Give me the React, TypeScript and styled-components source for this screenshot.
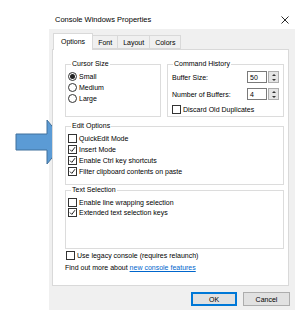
import styled, { createGlobalStyle } from 'styled-components';

const GlobalStyle = createGlobalStyle`
  html, body {
    margin: 0;
    padding: 0;
    background: #fff;
  }
  body {
    font-family: 'Liberation Sans', Arial, sans-serif;
    font-size: 7px;
    color: #000;
  }
`;

const Page = styled.div`
  position: relative;
  width: 300px;
  height: 315px;
  overflow: hidden;
  background: #fff;
`;

const Window = styled.div`
  margin-left: 49px;
  width: 246px;
  display: flex;
  flex-direction: column;
`;

const TitleBar = styled.div`
  height: 19px;
  padding-top: 10px;
  display: flex;
  align-items: center;
  justify-content: space-between;
  padding-left: 6px;
  padding-right: 6px;
`;

const Title = styled.span`
  font-size: 7.5px;
  color: #000;
`;

const Body = styled.div`
  height: 281px;
  box-sizing: border-box;
  background: #f0f0f0;
  padding: 4px 6px 0 3px;
  display: flex;
  flex-direction: column;
`;

const TabStrip = styled.div`
  display: flex;
  align-items: flex-end;
  height: 16px;
  padding-left: 1px;
`;

const Tab = styled.div<{ $active?: boolean }>`
  position: relative;
  box-sizing: border-box;
  height: ${(p) => (p.$active ? '17px' : '14px')};
  margin-bottom: ${(p) => (p.$active ? '-1px' : '0')};
  margin-left: -1px;
  padding: 0 ${(p) => (p.$active ? '7px' : '5px')};
  border: 1px solid #d9d9d9;
  border-bottom: ${(p) => (p.$active ? 'none' : '1px solid #d9d9d9')};
  background: ${(p) => (p.$active ? '#fff' : '#f0f0f0')};
  z-index: ${(p) => (p.$active ? 2 : 1)};
  display: flex;
  align-items: center;
  padding-bottom: ${(p) => (p.$active ? '2px' : '0')};

  &:first-child {
    margin-left: 0;
  }
`;

const Panel = styled.div`
  position: relative;
  z-index: 1;
  box-sizing: border-box;
  height: 237px;
  background: #fff;
  border: 1px solid #d9d9d9;
  padding: 9px 4px 0 12px;
  display: flex;
  flex-direction: column;
`;

const TopRow = styled.div`
  display: flex;
  gap: 6px;
`;

const GroupBox = styled.fieldset<{ $width?: number; $height?: number; $mt?: number }>`
  box-sizing: border-box;
  margin: ${(p) => p.$mt ?? 0}px 0 0 0;
  padding: 2px 4px 1px 2px;
  border: 1px solid #dcdcdc;
  min-width: 0;
  ${(p) => (p.$width ? `width: ${p.$width}px; flex: none;` : 'flex: 1;')}
  ${(p) => (p.$height ? `height: ${p.$height}px;` : '')}
`;

const Legend = styled.legend`
  padding: 0 1px;
  margin-left: 3px;
  line-height: 10px;
`;

const OptionRow = styled.label<{ $h?: number }>`
  display: flex;
  align-items: center;
  height: ${(p) => p.$h ?? 11}px;
  gap: 2px;
  white-space: nowrap;
`;

const RadioCircle = styled.span<{ $checked?: boolean }>`
  box-sizing: border-box;
  width: 9px;
  height: 9px;
  border-radius: 50%;
  border: 1px solid #333;
  background: #fff;
  display: flex;
  align-items: center;
  justify-content: center;

  &::after {
    content: '';
    width: 5px;
    height: 5px;
    border-radius: 50%;
    background: ${(p) => (p.$checked ? '#222' : 'transparent')};
  }
`;

const CheckBox = styled.span`
  box-sizing: border-box;
  width: 9px;
  height: 9px;
  border: 1px solid #333;
  background: #fff;
  display: flex;
  align-items: center;
  justify-content: center;
  flex: none;
`;

const SpinRow = styled.div<{ $mt?: number }>`
  display: flex;
  align-items: center;
  justify-content: space-between;
  height: 12px;
  margin-top: ${(p) => p.$mt ?? 0}px;
  padding-left: 2px;
`;

const SpinBox = styled.div`
  display: flex;
  gap: 1px;
  height: 12px;
`;

const SpinValue = styled.div`
  box-sizing: border-box;
  width: 20px;
  height: 12px;
  border: 1px solid #7a7a7a;
  background: #fff;
  padding-left: 2px;
  display: flex;
  align-items: center;
`;

const SpinButtons = styled.div`
  box-sizing: border-box;
  width: 11px;
  height: 12px;
  border: 1px solid #adadad;
  background: #e5e5e5;
  display: flex;
  flex-direction: column;
  align-items: center;
  justify-content: space-around;
`;

const Arrow = styled.span<{ $down?: boolean }>`
  width: 0;
  height: 0;
  border-left: 2px solid transparent;
  border-right: 2px solid transparent;
  ${(p) => (p.$down ? 'border-top: 2px solid #333;' : 'border-bottom: 2px solid #333;')}
`;

const DiscardRow = styled(OptionRow)`
  margin-top: 4px;
  padding-left: 2px;
`;

const Bottom = styled.div`
  margin-top: auto;
  padding-bottom: 11px;
  display: flex;
  flex-direction: column;
`;

const LegacyRow = styled(OptionRow)`
  height: 12px;
  margin-left: 1px;
`;

const InfoLine = styled.div`
  margin-top: 1px;
  line-height: 12px;
  white-space: nowrap;
`;

const Link = styled.a`
  color: #0066cc;
  text-decoration: underline;
`;

const ButtonRow = styled.div`
  display: flex;
  justify-content: flex-end;
  gap: 6px;
  margin-top: 6px;
  margin-right: -1px;
`;

const Button = styled.button<{ $default?: boolean }>`
  box-sizing: border-box;
  width: ${(p) => (p.$default ? '46px' : '47px')};
  height: 14px;
  padding: 0;
  font: inherit;
  color: #000;
  background: #e1e1e1;
  border: 1px solid ${(p) => (p.$default ? '#0078d7' : '#adadad')};
  ${(p) => (p.$default ? 'box-shadow: inset 0 0 0 1px #0078d7;' : '')}
`;

const PointerArrow = styled.svg`
  position: absolute;
  left: 0;
  top: 0;
  pointer-events: none;
`;

function Check({ checked }: { checked?: boolean }) {
  return (
    <CheckBox>
      {checked && (
        <svg width="7" height="7" viewBox="0 0 7 7">
          <path d="M1 3.6 L2.8 5.4 L6 1.2" fill="none" stroke="#222" strokeWidth="1" />
        </svg>
      )}
    </CheckBox>
  );
}

function Spin({ value }: { value: string }) {
  return (
    <SpinBox>
      <SpinValue>{value}</SpinValue>
      <SpinButtons>
        <Arrow />
        <Arrow $down />
      </SpinButtons>
    </SpinBox>
  );
}

export default function App() {
  return (
    <Page>
      <GlobalStyle />
      <Window>
        <TitleBar>
          <Title>Console Windows Properties</Title>
          <svg width="8" height="8" viewBox="0 0 8 8">
            <path d="M0.5 0.5 L7.5 7.5 M7.5 0.5 L0.5 7.5" stroke="#111" strokeWidth="0.9" />
          </svg>
        </TitleBar>
        <Body>
          <TabStrip>
            <Tab $active>Options</Tab>
            <Tab>Font</Tab>
            <Tab>Layout</Tab>
            <Tab>Colors</Tab>
          </TabStrip>
          <Panel>
            <TopRow>
              <GroupBox $width={96} $height={58}>
                <Legend>Cursor Size</Legend>
                <OptionRow>
                  <RadioCircle $checked />
                  Small
                </OptionRow>
                <OptionRow>
                  <RadioCircle />
                  Medium
                </OptionRow>
                <OptionRow>
                  <RadioCircle />
                  Large
                </OptionRow>
              </GroupBox>
              <GroupBox $height={58}>
                <Legend>Command History</Legend>
                <SpinRow>
                  Buffer Size:
                  <Spin value="50" />
                </SpinRow>
                <SpinRow $mt={5}>
                  Number of Buffers:
                  <Spin value="4" />
                </SpinRow>
                <DiscardRow>
                  <Check />
                  Discard Old Duplicates
                </DiscardRow>
              </GroupBox>
            </TopRow>
            <GroupBox $mt={4}>
              <Legend>Edit Options</Legend>
              <OptionRow>
                <Check />
                QuickEdit Mode
              </OptionRow>
              <OptionRow>
                <Check checked />
                Insert Mode
              </OptionRow>
              <OptionRow>
                <Check checked />
                Enable Ctrl key shortcuts
              </OptionRow>
              <OptionRow>
                <Check checked />
                Filter clipboard contents on paste
              </OptionRow>
            </GroupBox>
            <GroupBox $mt={0}>
              <Legend>Text Selection</Legend>
              <OptionRow $h={10}>
                <Check />
                Enable line wrapping selection
              </OptionRow>
              <OptionRow $h={10}>
                <Check checked />
                Extended text selection keys
              </OptionRow>
            </GroupBox>
            <Bottom>
              <LegacyRow>
                <Check />
                Use legacy console (requires relaunch)
              </LegacyRow>
              <InfoLine>
                Find out more about <Link>new console features</Link>
              </InfoLine>
            </Bottom>
          </Panel>
          <ButtonRow>
            <Button $default>OK</Button>
            <Button>Cancel</Button>
          </ButtonRow>
        </Body>
      </Window>
      <PointerArrow width="300" height="315" viewBox="0 0 300 315">
        <polygon
          points="16,134 47,134 47,120 65,142 47,164 47,150 16,150"
          fill="#5b9bd5"
          stroke="#41719c"
          strokeWidth="1"
        />
      </PointerArrow>
    </Page>
  );
}
